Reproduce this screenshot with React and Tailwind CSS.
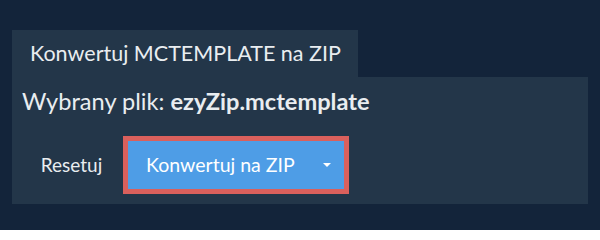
import React from 'react';

const App = () => {
  return (
    <div className="w-[600px] h-[230px] bg-[#13243a] pt-[30px] px-[12px] font-['Lato',sans-serif] text-[#e9edf0]">
      <div className="w-[346px] h-[47px] bg-[#233649] flex items-center pl-[18px] text-[21.5px]">
        Konwertuj MCTEMPLATE na ZIP
      </div>
      <div className="w-[576px] h-[127px] bg-[#233649] pt-[9px]">
        <p className="pl-[10px] text-[23.6px] leading-[30px]">
          Wybrany plik: <span className="font-bold">ezyZip.mctemplate</span>
        </p>
        <div className="mt-[20px] pl-[12px] flex items-center gap-[4px]">
          <button className="w-[95px] h-[48px] text-[19px] text-[#e9edf0] text-center">Resetuj</button>
          <button className="w-[226px] h-[58px] border-[5px] border-[#da605c] bg-[#4e9de6] flex items-center pl-[18px] pr-[13px] text-[19.5px] text-white">
            <span className="flex-1 text-left">Konwertuj na ZIP</span>
            <span className="w-0 h-0 border-x-[4px] border-x-transparent border-t-[4px] border-t-white" />
          </button>
        </div>
      </div>
    </div>
  );
};

export default App;
